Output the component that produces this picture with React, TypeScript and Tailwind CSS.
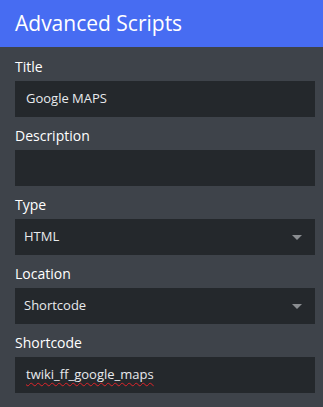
import { ReactNode } from "react";

function Field({ label, children }: { label: string; children: ReactNode }) {
  return (
    <div className="flex flex-col">
      <label className="mb-[4px] text-[14px] leading-[20px] font-medium text-white">
        {label}
      </label>
      {children}
    </div>
  );
}

function TextBox({ value, wavy }: { value?: string; wavy?: boolean }) {
  return (
    <div className="flex h-[36px] items-center bg-[#24282c] px-[11px] text-[13px] text-[#e8eaed]">
      {value && (
        <span
          className={
            wavy
              ? "underline decoration-wavy decoration-[#e0242a] decoration-1 underline-offset-[3px]"
              : ""
          }
        >
          {value}
        </span>
      )}
    </div>
  );
}

function SelectBox({ value }: { value: string }) {
  return (
    <div className="flex h-[36px] items-center justify-between bg-[#24282c] pl-[9px] pr-[13px] text-[13px] text-[#e8eaed]">
      <span>{value}</span>
      <svg width="10" height="5" viewBox="0 0 10 5">
        <path d="M0 0 H10 L5 5 Z" fill="#8a8d91" />
      </svg>
    </div>
  );
}

export default function App() {
  return (
    <div
      className="h-[407px] w-[323px] bg-[#3e434a]"
      style={{ fontFamily: '"Open Sans", "Noto Sans", sans-serif' }}
    >
      {/* header */}
      <div className="flex h-[47px] items-center bg-[#476cf2] px-[15px]">
        <h1 className="text-[21px] leading-none text-white">Advanced Scripts</h1>
      </div>

      {/* form */}
      <div className="flex flex-col gap-[9px] pl-[15px] pr-[8px] pt-[10px]">
        <Field label="Title">
          <TextBox value="Google MAPS" />
        </Field>
        <Field label="Description">
          <TextBox />
        </Field>
        <Field label="Type">
          <SelectBox value="HTML" />
        </Field>
        <Field label="Location">
          <SelectBox value="Shortcode" />
        </Field>
        <Field label="Shortcode">
          <TextBox value="twiki_ff_google_maps" wavy />
        </Field>
      </div>
    </div>
  );
}
